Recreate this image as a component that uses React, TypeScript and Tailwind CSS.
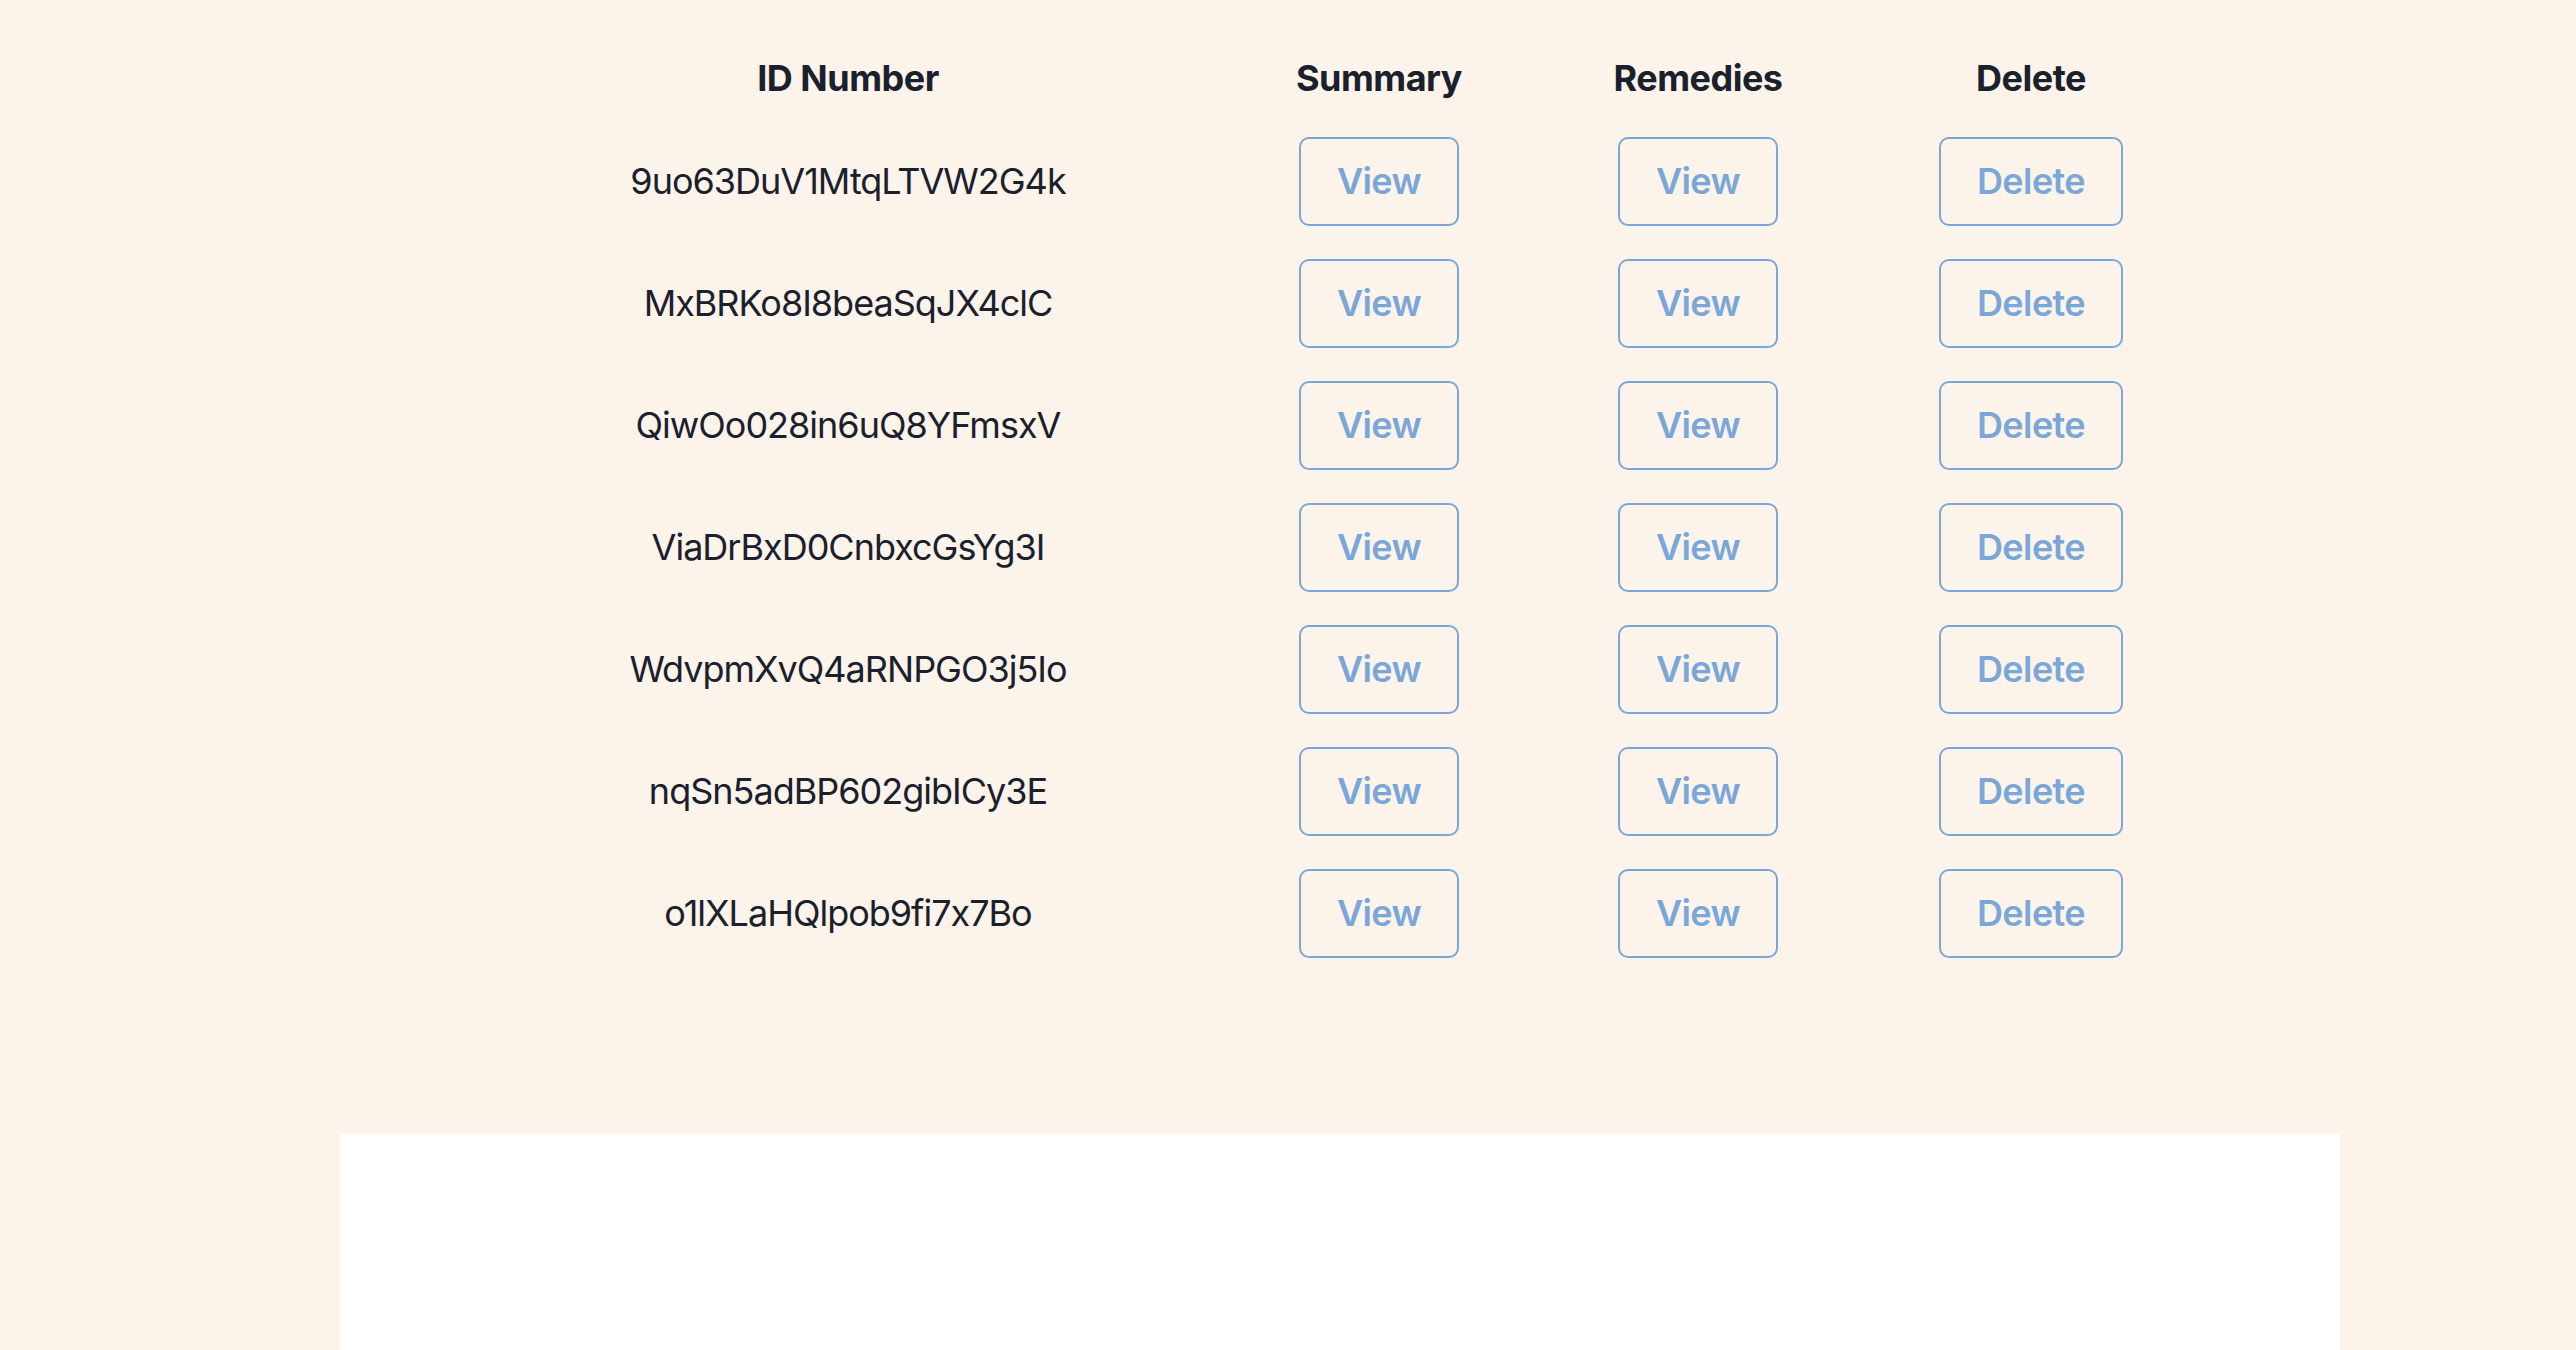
import React from 'react';

// ── Data ─────────────────────────────────────────────────────────────────────

const records = [
  '9uo63DuV1MtqLTVW2G4k',
  'MxBRKo8I8beaSqJX4clC',
  'QiwOo028in6uQ8YFmsxV',
  'ViaDrBxD0CnbxcGsYg3I',
  'WdvpmXvQ4aRNPGO3j5Io',
  'nqSn5adBP602gibICy3E',
  'o1lXLaHQlpob9fi7x7Bo',
];

const cols = 'grid grid-cols-[744px_318px_320px_346px]';

// ── Components ───────────────────────────────────────────────────────────────

const OutlineButton = ({ label }: { label: string }) => (
  <button className="h-[89px] px-[36px] rounded-[10px] border-2 border-[#7aa7d7] text-[36px] font-semibold tracking-[-0.6px] text-[#7aa7d7] bg-transparent leading-none">
    {label}
  </button>
);

export default function App() {
  return (
    <div
      className="h-[1350px] bg-[#fcf3ea] text-[#1a202c] overflow-hidden [font-feature-settings:'calt'_0]"
      style={{ fontFamily: 'Inter, "Noto Sans", sans-serif' }}
    >
      <div className="ml-[340px] w-[2000px] pt-[36px]">
        {/* Table */}
        <div className="pl-[136px]">
          <div className={`${cols} h-[84px] items-center text-center text-[36px] font-bold tracking-[-0.5px]`}>
            <div>ID Number</div>
            <div>Summary</div>
            <div>Remedies</div>
            <div>Delete</div>
          </div>
          {records.map((id) => (
            <div key={id} className={`${cols} h-[122px] items-center text-center text-[36px]`}>
              <div className="tracking-[-1px]">{id}</div>
              <div className="flex justify-center">
                <OutlineButton label="View" />
              </div>
              <div className="flex justify-center">
                <OutlineButton label="View" />
              </div>
              <div className="flex justify-center">
                <OutlineButton label="Delete" />
              </div>
            </div>
          ))}
        </div>

        {/* Panel below */}
        <div className="mt-[160px] h-[216px] bg-white" />
      </div>
    </div>
  );
}
